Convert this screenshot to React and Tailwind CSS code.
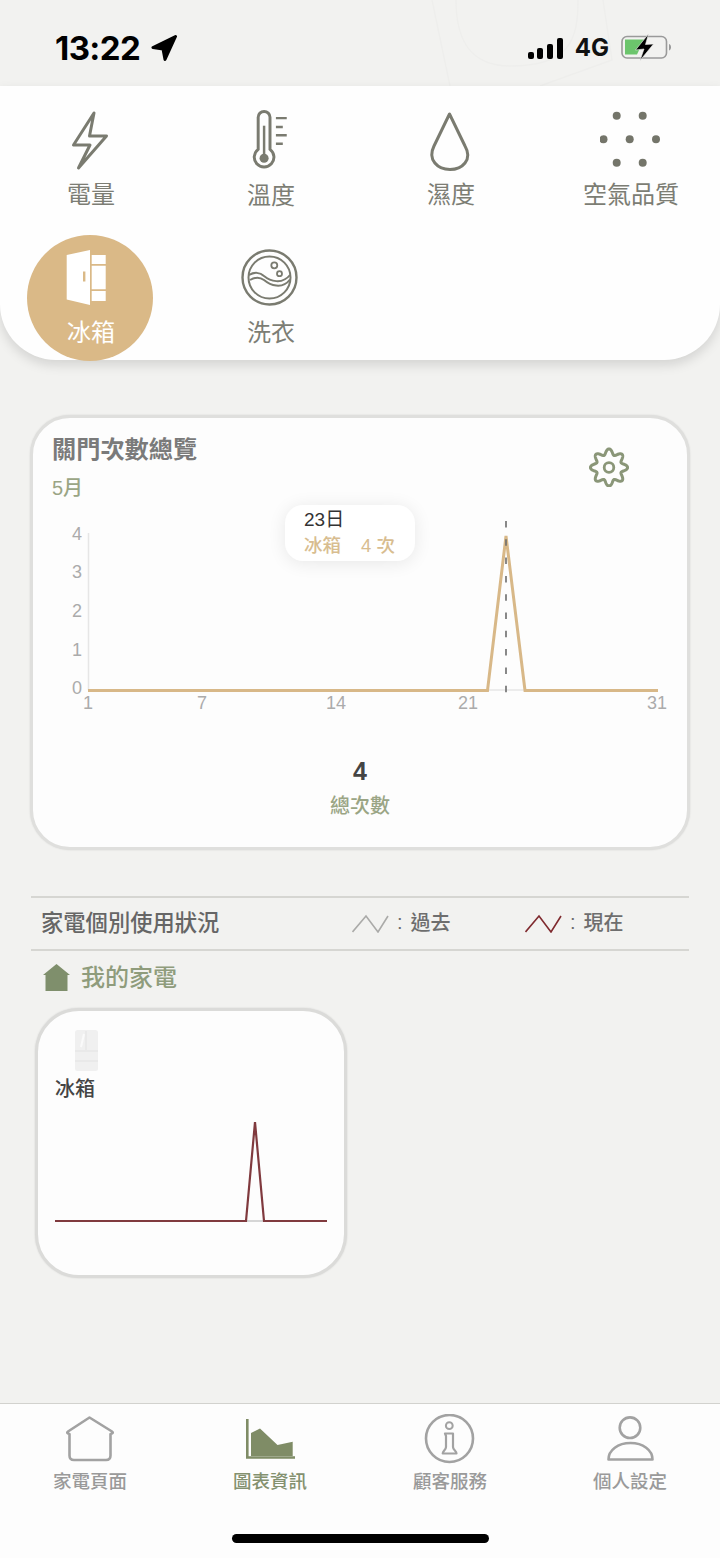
const gearPath = (() => {
  const pts = [];
  for (let i = 0; i < 240; i++) {
    const t = (i / 240) * Math.PI * 2;
    const r = 15.8 + 2.8 * Math.cos(8 * t);
    pts.push(`${(609 + r * Math.sin(t)).toFixed(2)} ${(467.5 - r * Math.cos(t)).toFixed(2)}`);
  }
  return "M" + pts.join("L") + "Z";
})();

const TopIcon = ({ box, w, h, children, className = "" }) => (
  <svg viewBox={box} width={w} height={h} fill="none" className={className}>{children}</svg>
);

const stroke = "#7a7b70";

function TopNav() {
  return (
    <div className="relative z-10 h-[274px] shrink-0 rounded-b-[56px] bg-[#fefefe] shadow-[0_5px_12px_rgba(0,0,0,0.13)]">
      <div className="grid grid-cols-4 gap-y-[23px] pt-[20px] text-[24px] leading-[32px] text-[#7c7d74]">
        <div className="flex h-[106px] flex-col items-center">
          <TopIcon box="60 106 60 66" w={60} h={66}>
            <path d="M94 113 73.5 145H90L78.5 168 106.5 136H89.5Z" stroke={stroke} strokeWidth="3" strokeLinejoin="round" />
          </TopIcon>
          <span className="ml-[2px] mt-[7px]">電量</span>
        </div>
        <div className="flex h-[106px] flex-col items-center">
          <TopIcon box="240 106 60 66" w={60} h={66}>
            <path d="M258 150V117.5a6 6 0 0 1 12 0V150a10 10 0 1 1-12 0Z" stroke={stroke} strokeWidth="3" />
            <circle cx="264" cy="159" r="4.6" fill={stroke} />
            <path d="M264 126V155" stroke={stroke} strokeWidth="2.5" />
            <path d="M276 118.3H287M276 127.3H283M276 135.7H287M276 144.3H283" stroke={stroke} strokeWidth="2.4" />
          </TopIcon>
          <span className="ml-[2px] mt-[9px]">溫度</span>
        </div>
        <div className="flex h-[106px] flex-col items-center">
          <TopIcon box="420 106 60 66" w={60} h={66}>
            <path d="M449.5 114 434 146C427 160 438 169.5 450 169.5S473 160 465 146Z" stroke={stroke} strokeWidth="3" strokeLinejoin="round" />
          </TopIcon>
          <span className="ml-[2px] mt-[7px]">濕度</span>
        </div>
        <div className="flex h-[106px] flex-col items-center">
          <TopIcon box="600 106 60 66" w={60} h={66}>
            {[[616.7, 115.7], [642.7, 115.7], [603.5, 139.3], [629.7, 139.3], [656, 139.3], [616.7, 162.7], [642.7, 162.7]].map(([x, y]) => (
              <circle key={`${x}-${y}`} cx={x} cy={y} r="4" fill="#74756a" />
            ))}
          </TopIcon>
          <span className="ml-[2px] mt-[7px]">空氣品質</span>
        </div>
        <div className="mx-auto flex h-[126px] w-[126px] flex-col items-center rounded-full bg-[#dab987] pt-[14px] text-white">
          <TopIcon box="64 249 52 58" w={52} h={58}>
            <path d="M66.7 255 90 250V305L66.7 299.5Z" fill="#fff" />
            <rect x="83" y="271.5" width="2.4" height="10" fill="#dab987" />
            <path d="M91.7 255H105.7V264H91.7ZM91.7 265.7H105.7V289.3H91.7ZM91.7 291H105.7V301H91.7Z" fill="#fff" />
          </TopIcon>
          <span className="ml-[2px] mt-[10px]">冰箱</span>
        </div>
        <div className="mx-auto flex h-[126px] w-[126px] flex-col items-center pt-[14px]">
          <TopIcon box="241 249 58 58" w={58} h={58}>
            <circle cx="269.5" cy="277.5" r="27" stroke={stroke} strokeWidth="2.4" />
            <circle cx="269.5" cy="277.5" r="21" stroke={stroke} strokeWidth="2" />
            <path d="M249 275C254 272 260 272 264 276C270 281 282 285 290 275" stroke={stroke} strokeWidth="2" />
            <path d="M250 280C255 277 260 277 264 280C270 285 282 290 290 279.5" stroke={stroke} strokeWidth="2" />
            <circle cx="274.3" cy="265.3" r="3" stroke={stroke} strokeWidth="1.8" />
            <circle cx="279.5" cy="273.7" r="2.5" stroke={stroke} strokeWidth="1.8" />
          </TopIcon>
          <span className="ml-[2px] mt-[10px]">洗衣</span>
        </div>
      </div>
    </div>
  );
}

function OverviewCard() {
  return (
    <div className="relative mx-[30px] mt-[55px] h-[435px] rounded-[40px] border-[3px] border-[#dfdfdd] bg-[#fdfdfd] shadow-[0_0_2px_rgba(0,0,0,0.12)]">
      <div className="flex items-start justify-between pl-[19px] pr-[58px] pt-[15px]">
        <div>
          <div className="text-[24.2px] font-bold leading-[34px] text-[#7a7a7a]">關門次數總覽</div>
          <div className="mt-[7px] text-[20px] font-medium leading-[28px] text-[#9aa585]">5月</div>
        </div>
        <svg viewBox="589 447 40 40" width={40} height={40} fill="none" className="mt-[14px]">
          <path d={gearPath} stroke="#8a9678" strokeWidth="3" strokeLinejoin="round" />
          <circle cx="609" cy="467.5" r="4.8" stroke="#8a9678" strokeWidth="2.8" />
        </svg>
      </div>
      <svg viewBox="33 515 654 210" width={654} height={210} fill="none" className="mt-[13px] block">
        <path d="M88.5 533V690" stroke="#e6e6e6" strokeWidth="1.5" />
        <path d="M487 690H525" stroke="#e6e6e6" strokeWidth="1.5" />
        <path d="M88 690.5H487.5L506 536 525 690.5H658" stroke="#d8b888" strokeWidth="3" />
        <path d="M506 521V694" stroke="#6c6c6c" strokeWidth="1.6" strokeDasharray="6.5 11.8" />
        <g fill="#ababab" fontSize="18" fontFamily="'Liberation Sans', sans-serif" textAnchor="middle">
          <text x="77" y="540">4</text>
          <text x="77" y="578">3</text>
          <text x="77" y="617">2</text>
          <text x="77" y="655.5">1</text>
          <text x="77" y="694">0</text>
          <text x="88" y="709">1</text>
          <text x="202" y="709">7</text>
          <text x="336" y="709">14</text>
          <text x="468" y="709">21</text>
          <text x="657" y="709">31</text>
        </g>
      </svg>
      <div className="mt-[30px] text-center text-[25px] font-bold leading-[32px] text-[#444]">4</div>
      <div className="mt-[5px] text-center text-[20px] font-medium leading-[28px] text-[#9aa585]">總次數</div>
      <div className="absolute left-[252px] top-[87px] h-[56px] w-[130px] rounded-[18px] bg-white pl-[19px] pt-[2px] shadow-[0_2px_18px_rgba(0,0,0,0.09)]">
        <div className="text-[19px] leading-[26px] text-[#333]">23日</div>
        <div className="flex text-[18.5px] font-medium leading-[26px] text-[#d8bd90]">
          <span>冰箱</span>
          <span className="ml-[20px]">4 次</span>
        </div>
      </div>
    </div>
  );
}

function Zig({ color }) {
  return (
    <svg viewBox="0 0 37 19" width={37} height={19} fill="none">
      <path d="M0.5 18 14 2 26 18 36 2" stroke={color} strokeWidth="1.6" />
    </svg>
  );
}

function ApplianceSection() {
  return (
    <div className="mx-[30px] mt-[46px]">
      <div className="mx-px flex h-[55px] items-center border-y-2 border-[#d6d6d2]">
        <div className="w-[321px] pl-[10px] text-[22.3px] font-medium text-[#666]">家電個別使用狀況</div>
        <div className="flex w-[173px] items-center text-[20px] font-medium text-[#6e6e6e]">
          <Zig color="#aaaaa8" />
          <span className="ml-[8px] -translate-y-[2px]">:</span>
          <span className="ml-[8px] -translate-y-[1px]">過去</span>
        </div>
        <div className="flex items-center text-[20px] font-medium text-[#6e6e6e]">
          <Zig color="#7f2a2e" />
          <span className="ml-[8px] -translate-y-[2px]">:</span>
          <span className="ml-[8px] -translate-y-[1px]">現在</span>
        </div>
      </div>
      <div className="flex h-[55px] items-center pb-[2px] pl-[13px]">
        <svg viewBox="43 964 27 27" width={27} height={27}>
          <path d="M56.5 964 70 975H67.5V991H45.5V975H43Z" fill="#7f8f6c" />
        </svg>
        <span className="ml-[11px] text-[24px] font-medium text-[#8f9c7c]">我的家電</span>
      </div>
      <div className="ml-[5px] mt-[2px] h-[270px] w-[312px] rounded-[44px] border-[3px] border-[#dbdbd9] bg-[#fdfdfd] pl-[17px] pt-[19px] shadow-[0_0_2px_rgba(0,0,0,0.14)]">
        <svg viewBox="75 1030 23 42" width={23} height={42} className="ml-[20px]">
          <rect x="75" y="1030" width="23" height="41" rx="2.5" fill="#f0f0f0" />
          <path d="M86 1031V1050M75 1051H98M75 1061H98" stroke="#e2e2e2" strokeWidth="1" />
          <path d="M84 1034 81 1047" stroke="#fafafa" strokeWidth="2" />
        </svg>
        <div className="mt-[3px] text-[20px] font-medium leading-[28px] text-[#444]">冰箱</div>
        <svg viewBox="55 1110 273 130" width={273} height={130} fill="none" className="mt-[7px] block">
          <path d="M246 1221H264" stroke="#c9c9c9" strokeWidth="1.5" />
          <path d="M55 1221H246L255 1122 264 1221H327" stroke="#803a3e" strokeWidth="2.2" />
        </svg>
      </div>
    </div>
  );
}

const navText = "mt-[6px] text-[18.5px] font-medium leading-[24px]";

function BottomNav() {
  return (
    <div className="mt-auto h-[155px] border-t border-[#d2d2ce] bg-[#fdfdfd]">
      <div className="grid grid-cols-4 pt-[10px] text-[#9a9a9a]">
        <div className="flex flex-col items-center">
          <svg viewBox="60 1414 60 50" width={60} height={50} fill="none">
            <path d="M89.5 1417.5 112 1431.5C113.5 1432.5 113 1433.5 110.5 1434V1455.5C110.5 1458.5 109 1460 106 1460H74C71 1460 69.5 1458.5 69.5 1455.5V1434C67 1433.5 66.5 1432.5 68 1431.5Z" stroke="#a2a2a2" strokeWidth="2.6" strokeLinejoin="round" />
          </svg>
          <span className={navText}>家電頁面</span>
        </div>
        <div className="flex flex-col items-center text-[#84916f]">
          <svg viewBox="240 1414 60 50" width={60} height={50}>
            <path d="M247.3 1419V1457.5H295" fill="none" stroke="#7f8c66" strokeWidth="2.6" />
            <path d="M251 1433 260 1428.5 277.5 1445 292.7 1441.7V1456H251Z" fill="#7f8c66" />
          </svg>
          <span className={navText}>圖表資訊</span>
        </div>
        <div className="flex flex-col items-center">
          <svg viewBox="420 1414 60 50" width={60} height={50} fill="none">
            <circle cx="449.5" cy="1438.5" r="23.5" stroke="#a2a2a2" strokeWidth="2.6" />
            <circle cx="449.3" cy="1425.7" r="3.4" stroke="#a2a2a2" strokeWidth="2" />
            <path d="M445 1433.5H453V1447C453 1450 456.5 1451 456.5 1453.5H442.7C442.7 1451 446 1450 446 1447V1436Z" stroke="#a2a2a2" strokeWidth="2.2" strokeLinejoin="round" />
          </svg>
          <span className={navText}>顧客服務</span>
        </div>
        <div className="flex flex-col items-center">
          <svg viewBox="600 1414 60 50" width={60} height={50} fill="none">
            <circle cx="630" cy="1427.7" r="10.3" stroke="#a2a2a2" strokeWidth="2.6" />
            <path d="M608.5 1459.5C608.5 1450 618 1443 630.5 1443S652.5 1450 652.5 1459.5Z" stroke="#a2a2a2" strokeWidth="2.6" strokeLinejoin="round" />
          </svg>
          <span className={navText}>個人設定</span>
        </div>
      </div>
      <div className="mx-auto mt-[40px] h-[9px] w-[257px] rounded-full bg-black" />
    </div>
  );
}

function StatusBar() {
  return (
    <div className="relative flex h-[86px] shrink-0 items-start justify-between pl-[55px] pr-[48px] pt-[30px]">
      <svg viewBox="420 0 200 86" width={200} height={86} fill="none" className="absolute left-[420px] top-0 z-0">
        <path d="M432 0 450 86M456 0C456 40 470 66 510 66C570 66 578 40 578 0M603 0 612 60 540 86" stroke="#eeeeec" strokeWidth="1.4" />
      </svg>
      <div className="relative z-10 flex items-center">
        <span className="w-[87px] font-['Inter',sans-serif] text-[33px] font-bold leading-[36px] tracking-[-0.6px] text-black">13:22</span>
        <svg viewBox="0 0 26 26" width={26} height={26} className="ml-[9px]">
          <path d="M24.5 1.5 2 12.5 12 14 14 24.5Z" fill="#000" stroke="#000" strokeWidth="3" strokeLinejoin="round" />
        </svg>
      </div>
      <div className="relative z-10 flex h-[36px] items-center">
        <div className="flex h-[21px] items-end gap-[3.7px]">
          <div className="h-[7px] w-[6px] rounded-[2px] bg-black" />
          <div className="h-[11px] w-[6px] rounded-[2px] bg-black" />
          <div className="h-[15px] w-[6px] rounded-[2px] bg-black" />
          <div className="h-[21px] w-[6px] rounded-[2px] bg-black" />
        </div>
        <span className="ml-[12px] font-['Inter',sans-serif] text-[24px] font-bold leading-[36px] text-[#111]">4G</span>
        <svg viewBox="0 -2 52 30" width={52} height={30} fill="none" className="ml-[11px]">
          <rect x="2" y="1.5" width="44.5" height="21.5" rx="5" stroke="#9a9a9a" strokeWidth="1.6" />
          <path d="M5 4.5H24L17 19.5H5Z" fill="#6cc56c" />
          <path d="M49 9C50.5 9.5 51 11 51 12.3S50.5 15 49 15.5Z" fill="#9a9a9a" />
          <path d="M28.5 -1 15.5 15 24 14 20 25.5 33.5 9 25.5 9.5Z" fill="#000" stroke="#f2f2f0" strokeWidth="0.6" strokeLinejoin="round" />
        </svg>
      </div>
    </div>
  );
}

export default function App() {
  return (
    <div className="relative flex h-[1558px] w-[720px] flex-col overflow-hidden bg-[#f2f2f0] font-['Liberation_Sans','Noto_Sans_CJK_TC',sans-serif]">
      <StatusBar />
      <TopNav />
      <OverviewCard />
      <ApplianceSection />
      <BottomNav />
    </div>
  );
}
